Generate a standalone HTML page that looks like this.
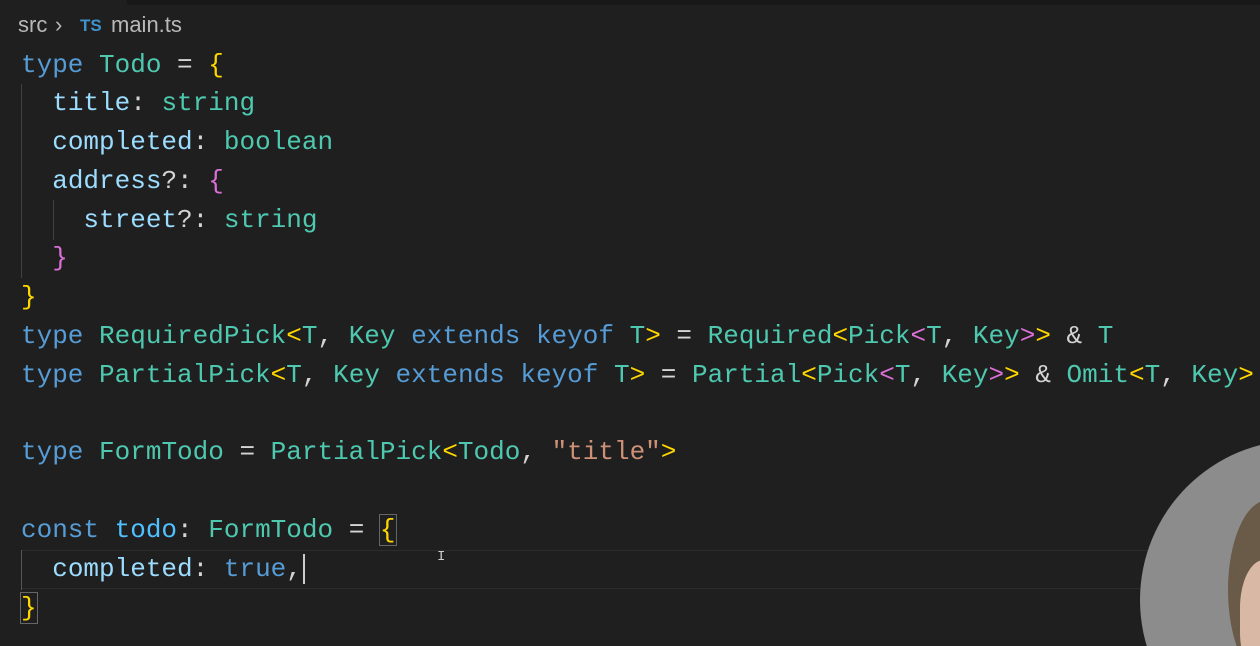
<!DOCTYPE html>
<html><head><meta charset="utf-8"><style>
html,body{margin:0;padding:0;background:#1f1f1f;width:1260px;height:646px;overflow:hidden}
#w{position:relative;width:1260px;height:646px;overflow:hidden}
.top{position:absolute;left:127px;top:0;right:0;height:5px;background:#181818}
.bc{position:absolute;top:12px;font:22px "Liberation Sans",sans-serif;color:#b8b8b8;white-space:nowrap}
.ts{color:#3f93c9;font-weight:bold;font-size:17px;top:16px}
pre{position:absolute;left:21px;top:45.5px;margin:0;font:26px/38.8px "Liberation Mono",monospace;color:#d4d4d4}
.k{color:#569cd6}.t{color:#4ec9b0}.p{color:#9cdcfe}.y{color:#ffd700}.m{color:#da70d6}.s{color:#ce9178}.v{color:#4fc1ff}
.g{position:absolute;width:1px;background:#404040}
.hl{position:absolute;left:21px;right:0;height:1px;background:#2c2c2c}
.cam{position:absolute;left:1140px;top:440px;width:320px;height:320px;border-radius:50%;background:#8b8c8b}
.hair{position:absolute;left:1228px;top:500px;width:80px;height:180px;border-radius:50%;background:#6a5a48}
.face{position:absolute;left:1240px;top:560px;width:60px;height:120px;border-radius:40%;background:#d9b9a6}
</style></head><body><div id="w">
<div class="top"></div>
<div class="bc" style="left:18px">src</div>
<div class="bc" style="left:55px">›</div>
<div class="bc ts" style="left:80px">TS</div>
<div class="bc" style="left:111px">main.ts</div>
<div class="g" style="left:21px;top:84px;height:194px"></div>
<div class="g" style="left:53px;top:200px;height:40px"></div>
<div class="hl" style="top:550px"></div>
<div class="hl" style="top:588px"></div>
<div class="g" style="left:21px;top:550px;height:40px;background:#555"></div>
<pre><span class="k">type</span> <span class="t">Todo</span> = <span class="y">{</span>
  <span class="p">title</span>: <span class="t">string</span>
  <span class="p">completed</span>: <span class="t">boolean</span>
  <span class="p">address</span>?: <span class="m">{</span>
    <span class="p">street</span>?: <span class="t">string</span>
  <span class="m">}</span>
<span class="y">}</span>
<span class="k">type</span> <span class="t">RequiredPick</span><span class="y">&lt;</span><span class="t">T</span>, <span class="t">Key</span> <span class="k">extends</span> <span class="k">keyof</span> <span class="t">T</span><span class="y">&gt;</span> = <span class="t">Required</span><span class="y">&lt;</span><span class="t">Pick</span><span class="m">&lt;</span><span class="t">T</span>, <span class="t">Key</span><span class="m">&gt;</span><span class="y">&gt;</span> &amp; <span class="t">T</span>
<span class="k">type</span> <span class="t">PartialPick</span><span class="y">&lt;</span><span class="t">T</span>, <span class="t">Key</span> <span class="k">extends</span> <span class="k">keyof</span> <span class="t">T</span><span class="y">&gt;</span> = <span class="t">Partial</span><span class="y">&lt;</span><span class="t">Pick</span><span class="m">&lt;</span><span class="t">T</span>, <span class="t">Key</span><span class="m">&gt;</span><span class="y">&gt;</span> &amp; <span class="t">Omit</span><span class="y">&lt;</span><span class="t">T</span>, <span class="t">Key</span><span class="y">&gt;</span>

<span class="k">type</span> <span class="t">FormTodo</span> = <span class="t">PartialPick</span><span class="y">&lt;</span><span class="t">Todo</span>, <span class="s">"title"</span><span class="y">&gt;</span>

<span class="k">const</span> <span class="v">todo</span>: <span class="t">FormTodo</span> = <span class="y" style="outline:1px solid #666">{</span>
  <span class="p">completed</span>: <span class="k">true</span>,<span style="border-left:2px solid #ccc;margin-left:1px"></span>
<span class="y" style="outline:1px solid #666">}</span></pre>
<div style="position:absolute;left:437px;top:549px;color:#ccc;font:14px 'Liberation Mono',monospace">I</div>
<div class="cam"></div>
<div class="hair"></div>
<div class="face"></div>
</div></body></html>
